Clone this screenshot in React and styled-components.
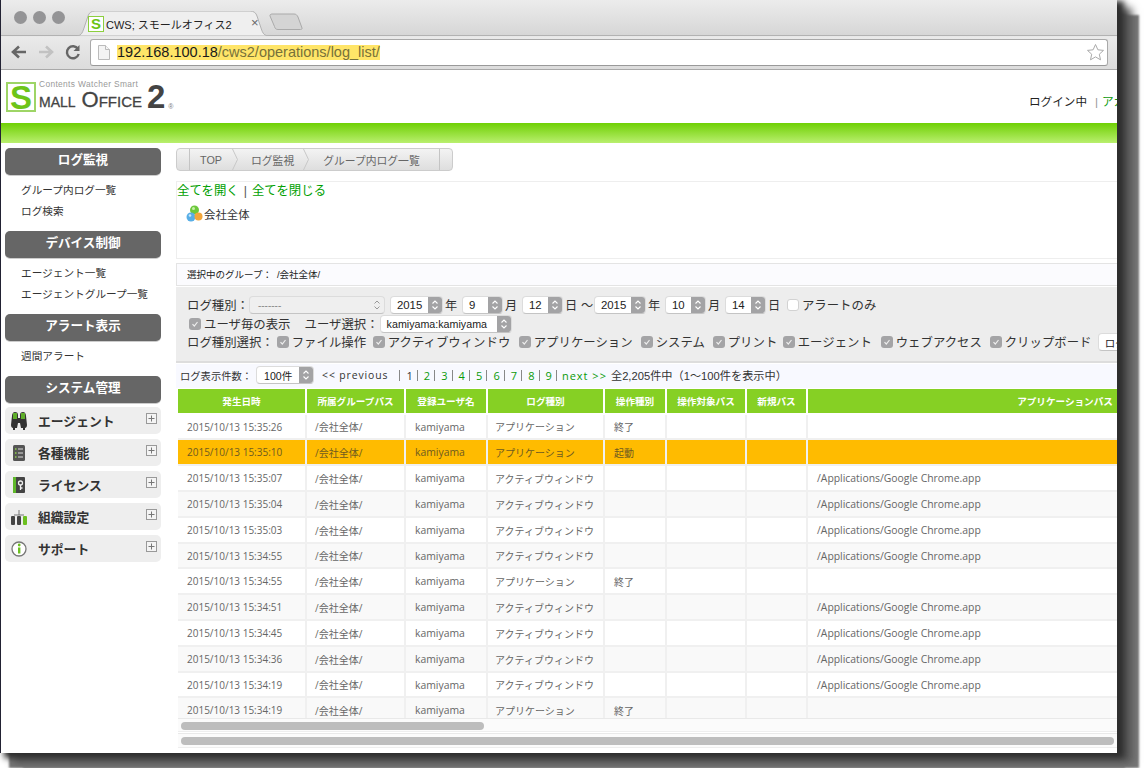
import React from "react";
import styled, { createGlobalStyle } from "styled-components";

const JP = `"Liberation Sans", "Noto Sans CJK JP", sans-serif`;
const TB = `"Open Sans", "Noto Sans CJK JP", sans-serif`;

const Global = createGlobalStyle`
  html, body { margin: 0; padding: 0; background: #fff; }
  body { font-family: ${JP}; color: #333; }
  * { box-sizing: border-box; }
`;

const Stage = styled.div`
  width: 1145px; height: 768px; overflow: hidden; background: #fff;
  padding-left: 1px;
`;
const Win = styled.div`
  width: 1116px; height: 753px; background: #fff; overflow: hidden;
  box-shadow: -1px 0 0 #223, 5px 3px 6px 2px #2e2e2e, 14px 9px 8px 1px #555, 22px 15px 2px #777, 8px 15px 2px #777;
`;

const Chrome = styled.div`
  height: 70px; background: linear-gradient(#ececec, #d6d6d6 52%, #eaeaea 53%, #dcdcdc);
  border-bottom: 1px solid #a9a9a9;
`;
const TabStrip = styled.div`
  height: 36px; display: flex; align-items: flex-end; border-bottom: 1px solid #b2b2b2;
  position: relative;
`;
const Lights = styled.div`
  display: flex; gap: 6px; padding: 0 0 11px 13px; width: 74px; flex: none;
`;
const Light = styled.span`
  width: 13px; height: 13px; border-radius: 50%; background: #949496;
`;
const Tab = styled.div`
  position: relative; width: 196px; height: 25px; margin-bottom: -1px;
  display: flex; align-items: center; padding: 0 0 0 13px; font-size: 11px; color: #222;
  span { position: relative; }
`;
const TabShape = styled.svg`
  position: absolute; left: 0; top: 0;
`;
const Fav = styled.div`
  position: relative; width: 16px; height: 16px; border: 1px solid #8ccf3e; background: #fff;
  color: #6cc414; font: bold 15px/14px "Liberation Sans", sans-serif; text-align: center; margin-right: 2px;
`;
const TabClose = styled.i`
  position: absolute; left: 176px; top: 4px; font: normal 13px/16px "Liberation Sans", sans-serif; color: #666;
`;
const NewTab = styled.svg`
  margin: 0 0 5px -2px;
`;
const Toolbar = styled.div`
  height: 33px; display: flex; align-items: center; padding: 1px 8px 2px 9px;
`;
const NavIcon = styled.svg`
  width: 18px; height: 18px; margin-right: 9px; flex: none;
`;
const Omni = styled.div`
  width: 1018px; height: 27px; margin-left: -1px; background: #fff; border: 1px solid #a9a9a9; border-bottom-color: #999;
  border-radius: 3px; display: flex; align-items: center; padding: 0 2px 0 7px; position: relative;
`;
const UrlMark = styled.div`
  margin-left: 7px; background: #ffe568; height: 15px; font: 14.5px/15px "Liberation Sans", sans-serif; color: #77713a; white-space: nowrap;
  b { font-weight: normal; color: #1a1a1a; }
`;
const Star = styled.svg`
  margin-left: auto;
`;

const Header = styled.div`
  height: 53px; display: flex; align-items: flex-start; justify-content: space-between; padding: 12px 0 0 5px; overflow: hidden;
`;
const Logo = styled.div`
  display: flex; align-items: flex-start; width: 170px;
`;
const LogoS = styled.div`
  width: 30px; height: 30px; border: 2px solid #9ed566; color: #6dc419; font: bold 33px/27px "Liberation Sans", sans-serif; text-align: center; flex: none;
`;
const LogoWords = styled.div`
  display: flex; flex-direction: column; margin: -2px 0 0 3px; color: #444; width: 106px;
  small { font: 8.4px/9px "Liberation Sans", sans-serif; color: #999; letter-spacing: .35px; white-space: nowrap; }
`;
const LogoType = styled.div`
  display: flex; align-items: baseline; white-space: nowrap; line-height: 20px; color: #444; margin-top: 1px;
`;
const LogoPart = styled.span`
  font-size: ${p => p.$s}px; margin-right: ${p => p.$r || 0}px; -webkit-text-stroke: .3px #444;
`;
const LogoTwo = styled.div`
  font: bold 33px/29px "Liberation Sans", sans-serif; color: #444; margin-left: 2px;
`;
const LogoR = styled.span`
  font: 7px/8px "Liberation Sans", sans-serif; color: #777; margin: 21px 0 0 3px;
`;
const Login = styled.div`
  font-size: 11.6px; color: #222; white-space: nowrap; padding-top: 11px; width: 88px; overflow: hidden;
  em { font-style: normal; color: #999; margin: 0 4px 0 8px; }
  a { color: #0a9a0a; }
`;
const GreenBar = styled.div`
  height: 20px; background: linear-gradient(#6fd004, #b9ef6e);
`;

const Body = styled.div`
  display: flex; align-items: flex-start;
`;
const Side = styled.nav`
  width: 160px; margin-left: 4px; padding-top: 5px; flex: none;
`;
const SideHead = styled.div`
  width: 156px; height: 27px; border-radius: 5px; background: #666; color: #fff; font-size: 12.6px; font-weight: bold;
  text-align: center; line-height: 25px; margin-top: ${p => p.$top || 0}px;
  box-shadow: 0 1px 0 #ccc;
`;
const SideList = styled.ul`
  list-style: none; margin: 5px 0 0; padding: 0 0 0 16px; font-size: 10.67px; line-height: 21px; color: #333;
`;
const Accs = styled.div`
  margin-top: 4px; display: flex; flex-direction: column; gap: 5px;
`;
const Acc = styled.div`
  width: 156px; height: 27px; background: #eee; border-radius: 5px; display: flex; align-items: center;
  padding: 0 4px 0 6px; font-size: 12.8px; font-weight: bold; color: #333;
`;
const AccIcon = styled.svg`
  width: 16px; height: 18px; flex: none; margin-right: 11px;
`;
const Plus = styled.svg`
  margin-left: auto; margin-top: -4px;
`;

const Main = styled.main`
  width: 941px; margin-left: 11px; padding-top: 5px; flex: none; overflow: hidden;
`;
const Crumbs = styled.div`
  width: 277px; height: 23px; border: 1px solid #ccc; border-radius: 4px; background: linear-gradient(#f3f3f3, #dedede);
  display: flex; align-items: center; font-size: 10.8px; color: #666; position: relative; padding-left: 23px;
`;
const CrumbCap = styled.i`
  position: absolute; top: 0; bottom: 0; left: 12px; width: 1px; background: #c4c4c4;
`;
const CrumbEnd = styled.i`
  position: absolute; top: 0; bottom: 0; right: 12px; width: 1px; background: #c4c4c4;
`;
const Crumb = styled.span`
  display: inline-block; white-space: nowrap;
`;
const CrumbSep = styled.svg`
  margin: 0 ${p => p.$r}px 0 ${p => p.$l}px; flex: none;
`;
const TreeBox = styled.div`
  margin-top: 10px; height: 78px; border: 1px solid #eee; border-right: 0; padding: 2px 0 0 0;
`;
const TreeLinks = styled.div`
  font-size: 12.4px; line-height: 15px; white-space: nowrap; color: #00a000;
  em { font-style: normal; color: #555; margin: 0 5px; }
`;
const TreeNode = styled.div`
  display: flex; align-items: center; margin: 6px 0 0 9px; font-size: 11.4px; color: #333;
  svg { margin-right: 1px; }
`;
const GroupBar = styled.div`
  margin-top: 4px; height: 23px; background: #fbfbfe; border: 1px solid #e4e4e4; border-right: 0;
  font-size: 9.5px; line-height: 21px; padding-left: 10px; color: #222;
  span { margin-left: 5px; }
`;
const Filter = styled.div`
  margin-top: 1px; height: 76px; background: #ededed; padding: 9px 0 0 11px; border-bottom: 2px solid #ddd;
  font-size: 12.4px; color: #333; white-space: nowrap; overflow: hidden;
`;
const FRow = styled.div`
  display: flex; align-items: center; height: 18.5px; margin-left: ${p => p.$ml || 0}px;
`;
const Spin = styled.div`
  width: ${p => p.$w}px; height: 18px; border-radius: 4px; background: ${p => p.$plain ? "#efefef" : "#fff"};
  border: 1px solid #dcdcdc; border-bottom-color: #c4c4c4; display: flex; align-items: center; flex: none; overflow: hidden;
  font-size: ${p => p.$fs || 11.4}px; color: ${p => p.$plain ? "#888" : "#222"}; position: relative;
  margin-left: ${p => p.$ml || 0}px;
  span { flex: 1; padding-left: ${p => p.$pl || 6}px; min-width: 0; }
`;
const Stepper = styled.i`
  width: 14px; height: 100%; flex: none; background: ${p => p.$plain ? "transparent" : "#a3a3a5"}; display: flex; align-items: center; justify-content: center;
`;
const Unit = styled.span`
  width: 12px; flex: none; margin: 0 ${p => p.$r ?? 5}px 0 ${p => p.$l ?? 2}px; font-size: 12.2px;
`;
const Box = styled.span`
  width: 12px; height: 12px; border-radius: 3px; flex: none; margin-right: 3px;
  background: ${p => p.$off ? "#fff" : "#a4a4a6"}; border: ${p => p.$off ? "1px solid #d2d2d2" : "0"};
  display: inline-flex; align-items: center; justify-content: center;
`;
const Chk = styled.label`
  display: inline-flex; align-items: center; margin-left: ${p => p.$ml ?? 0}px; ${p => p.$w ? `width:${p.$w}px;` : ""} flex: none;
`;
const CountBar = styled.div`
  margin-top: 1px; height: 24px; background: #f8f9ff; display: flex; align-items: center; padding: 0 0 2px 4px; font-size: 10.3px; color: #333; white-space: nowrap;
`;
const Pager = styled.div`
  display: flex; align-items: center; font-family: "Open Sans", sans-serif; margin-left: 8px; font-size: 11px;
`;
const Prev = styled.span` font-size: 10.4px; letter-spacing: .9px; margin-right: 10px; `;
const PNum = styled.span`
  width: 17.4px; text-align: center; color: ${p => p.$cur ? "#333" : "#0a9a0a"}; position: relative; padding-left: 5px;
  &::before { content: ""; position: absolute; left: 1px; top: 2px; bottom: 2px; width: 1px; background: #888; }
`;
const PEnd = styled.i`
  width: 1px; height: 11px; background: #888; margin-left: 1px;
`;
const Next = styled.a`
  color: #0a9a0a; letter-spacing: 1px; margin: 0 4px 0 5px;
`;
const Total = styled.span`
  font-size: 11.2px;
`;
const TableWrap = styled.div`
  margin: 1px 0 0 2px; height: 329px; overflow: hidden;
`;
const Table = styled.table`
  width: 1146px; table-layout: fixed; border-collapse: separate; border-spacing: 0; font-family: ${TB};
`;
const Th = styled.th`
  height: 26px; background: #86d024; color: #fff; font-size: 9.6px; font-weight: bold; border-right: 2px solid #fff; border-bottom: 2px solid #fff; padding: 0; text-align: center;
  font-family: ${JP};
`;
const Td = styled.td`
  height: ${p => p.$h}px; padding: 0 0 0 ${p => p.$pl ?? 9}px; font-size: ${p => p.$fs || 10}px; border-right: 2px solid #f0f0f0; border-bottom: 2px solid #f0f0f0; white-space: nowrap; overflow: hidden;
  background: ${p => p.$hot ? "#ffbb00" : p.$alt ? "#f9f9f9" : "#fff"};
  color: ${p => p.$hot ? "#6d5a20" : "#666"};
`;
const Scroll = styled.div`
  height: ${p => p.$h}px; margin: ${p => p.$mt}px 0 0 2px; padding: ${p => p.$pt}px 3px 0 3px; background: #fbfbfb; border-top: 1px solid #e9e9e9;
  border-bottom: 1px solid #eee;
`;
const Thumb = styled.div`
  width: ${p => p.$w}; height: 8px; border-radius: 4px; background: #bdbdbd;
`;

const Arrows = () => (
  <svg width="8" height="12" viewBox="0 0 8 12" fill="none" stroke="#fff" strokeWidth="1.1">
    <path d="M1.5 4.5L4 2l2.5 2.5M1.5 7.5L4 10l2.5-2.5" />
  </svg>
);
const ArrowsDark = () => (
  <svg width="8" height="12" viewBox="0 0 8 12" fill="none" stroke="#999" strokeWidth="1">
    <path d="M1.5 4.5L4 2l2.5 2.5M1.5 7.5L4 10l2.5-2.5" />
  </svg>
);
const Num = ({ w, v, ml, fs, pl }) => (
  <Spin $w={w} $ml={ml} $fs={fs} $pl={pl}>
    <span>{v}</span>
    <Stepper><Arrows /></Stepper>
  </Spin>
);
const Tick = () => (
  <svg width="8" height="8" viewBox="0 0 8 8" fill="none" stroke="#eee" strokeWidth="1.2"><path d="M1.5 4.2L3.3 6l3.2-4" /></svg>
);
const Check = ({ children, ml, w }) => (
  <Chk $ml={ml} $w={w}><Box><Tick /></Box>{children}</Chk>
);
const PlusIcon = () => (
  <Plus width="11" height="11" viewBox="0 0 11 11" fill="none" stroke="#999">
    <rect x=".5" y=".5" width="10" height="10" fill="#f4f4f4" />
    <path d="M2.5 5.5h6M5.5 2.5v6" stroke="#777" />
  </Plus>
);
const Chevron = ({ l, r }) => (
  <CrumbSep $l={l} $r={r} width="6" height="21" viewBox="0 0 6 21" fill="none" stroke="#c8c8c8"><path d="M.5 0L5.5 10.5L.5 21" /></CrumbSep>
);

const AW = "アクティブウィンドウ";
const AP = "アプリケーション";
const PATH = "/Applications/Google Chrome.app";
const rows = [
  ["15:35:26", AP, "終了", "", 25],
  ["15:35:10", AP, "起動", "", 26],
  ["15:35:07", AW, "", PATH, 26],
  ["15:35:04", AW, "", PATH, 26],
  ["15:35:03", AW, "", PATH, 26],
  ["15:34:55", AW, "", PATH, 25],
  ["15:34:55", AP, "終了", "", 26],
  ["15:34:51", AW, "", PATH, 26],
  ["15:34:45", AW, "", PATH, 26],
  ["15:34:36", AW, "", PATH, 26],
  ["15:34:19", AW, "", PATH, 25],
  ["15:34:19", AP, "終了", "", 26],
];
const cols = [129, 99, 82, 117, 62, 80, 61, 516];
const heads = ["発生日時", "所属グループパス", "登録ユーザ名", "ログ種別", "操作種別", "操作対象パス", "新規パス", "アプリケーションパス"];
const kinds = ["ファイル操作", AW, AP, "システム", "プリント", "エージェント", "ウェブアクセス", "クリップボード"];

export default function App() {
  return (
    <Stage>
      <Global />
      <Win>
        <Chrome>
          <TabStrip>
            <Lights><Light /><Light /><Light /></Lights>
            <Tab>
              <TabShape width="196" height="25" viewBox="0 0 196 25">
                <path d="M0 25c6 0 7-2 9-8l4-12c1-3 3-5 7-5h155c4 0 6 2 7 5l4 12c2 6 3 8 10 8z" fill="#efefef" stroke="#b2b2b2" />
              </TabShape>
              <Fav>S</Fav>
              <span>CWS; スモールオフィス2</span>
              <TabClose>×</TabClose>
            </Tab>
            <NewTab width="34" height="17" viewBox="0 0 34 17">
              <path d="M3 1h22c2 0 3 1 4 3l4 11c.3 1-.5 1.500-1.500 1.500H9c-2 0-3-1-3.500-3L1 3c-.3-1 .5-2 2-2z" fill="#d4d4d4" stroke="#aaa" />
            </NewTab>
          </TabStrip>
          <Toolbar>
            <NavIcon viewBox="0 0 18 18" fill="none" stroke="#666" strokeWidth="2.6"><path d="M16 9H4M9 3.500L3 9l6 5.500" /></NavIcon>
            <NavIcon viewBox="0 0 18 18" fill="none" stroke="#c2c2c2" strokeWidth="2.6"><path d="M2 9h12M9 3.500L15 9l-6 5.500" /></NavIcon>
            <NavIcon viewBox="0 0 18 18" fill="none" stroke="#666" strokeWidth="2.4"><path d="M14 6a6 6 0 1 0 .7 5" /><path d="M15.500 2v6h-6z" fill="#666" stroke="none" /></NavIcon>
            <Omni>
              <svg width="12" height="15" viewBox="0 0 12 15" fill="#f4f4f4" stroke="#bbb"><path d="M.5.5h7l4 4v10H.5z" /><path d="M7.500.5v4h4" /></svg>
              <UrlMark><b>192.168.100.18</b>/cws2/operations/log_list/</UrlMark>
              <Star width="19" height="19" viewBox="0 0 19 19" fill="#fff" stroke="#aaa"><path d="M9.500 1.500l2.400 5.300 5.600.6-4.200 3.800 1.200 5.600-5-2.900-5 2.900 1.200-5.600L1.500 7.400l5.600-.6z" /></Star>
            </Omni>
          </Toolbar>
        </Chrome>
        <Header>
          <Logo>
            <LogoS>S</LogoS>
            <LogoWords>
              <small>Contents Watcher Smart</small>
              <LogoType>
                <LogoPart $s={14} $r={6}>MALL</LogoPart>
                <LogoPart $s={22}>O</LogoPart>
                <LogoPart $s={15}>FFICE</LogoPart>
              </LogoType>
            </LogoWords>
            <LogoTwo>2</LogoTwo>
            <LogoR>®</LogoR>
          </Logo>
          <Login>ログイン中<em>|</em><a>アカウント</a></Login>
        </Header>
        <GreenBar />
        <Body>
          <Side>
            <SideHead>ログ監視</SideHead>
            <SideList><li>グループ内ログ一覧</li><li>ログ検索</li></SideList>
            <SideHead $top={9}>デバイス制御</SideHead>
            <SideList><li>エージェント一覧</li><li>エージェントグループ一覧</li></SideList>
            <SideHead $top={9}>アラート表示</SideHead>
            <SideList><li>週間アラート</li></SideList>
            <SideHead $top={9}>システム管理</SideHead>
            <Accs>
              <Acc>
                <AccIcon viewBox="0 0 16 18"><path d="M4 0c2 0 3 1 3 3v3h2V3c0-2 1-3 3-3s3 2 3 4l1 9c0 2-1 3-2 3v2h-2v-2h-2l-1-5H7l-1 5H4v2H2v-2c-1 0-2-1-2-3l1-9c0-2 1-4 3-4z" fill="#333" /><path d="M2 1h4v6H2zM10 1h4v6h-4z" fill="#5fae2a" /></AccIcon>
                エージェント<PlusIcon />
              </Acc>
              <Acc>
                <AccIcon viewBox="0 0 16 18"><rect x="2" y="1" width="12" height="16" rx="1.500" fill="#555" /><path d="M7 5h5M7 9h5M7 13h5" stroke="#ddd" /><path d="M4 5h1.500M4 9h1.500M4 13h1.500" stroke="#8fd04a" strokeWidth="1.500" /></AccIcon>
                各種機能<PlusIcon />
              </Acc>
              <Acc>
                <AccIcon viewBox="0 0 16 18"><rect x="2" y="1" width="12" height="16" rx="1" fill="#444" /><rect x="2" y="1" width="3" height="16" fill="#5fb82a" /><circle cx="9.500" cy="7" r="2" fill="none" stroke="#eee" strokeWidth="1.300" /><path d="M9.500 9v5M9.500 12h2" stroke="#eee" strokeWidth="1.300" /></AccIcon>
                ライセンス<PlusIcon />
              </Acc>
              <Acc>
                <AccIcon viewBox="0 0 16 18"><path d="M8 2v5M3 7h10" stroke="#777" fill="none" /><rect x="0" y="8" width="4" height="9" rx="1" fill="#444" /><rect x="6" y="8" width="4" height="9" rx="1" fill="#444" /><rect x="12" y="8" width="4" height="9" rx="1" fill="#6cc020" /></AccIcon>
                組織設定<PlusIcon />
              </Acc>
              <Acc>
                <AccIcon viewBox="0 0 16 18"><circle cx="8" cy="9" r="7" fill="#fff" stroke="#777" strokeWidth="1.300" /><rect x="7" y="7.500" width="2.400" height="6" fill="#6cc020" /><circle cx="8.200" cy="5" r="1.400" fill="#6cc020" /></AccIcon>
                サポート<PlusIcon />
              </Acc>
            </Accs>
          </Side>
          <Main>
            <Crumbs>
              <CrumbCap /><CrumbEnd />
              <Crumb>TOP</Crumb><Chevron l={10} r={13} />
              <Crumb>ログ監視</Crumb><Chevron l={9} r={14} />
              <Crumb>グループ内ログ一覧</Crumb>
            </Crumbs>
            <TreeBox>
              <TreeLinks>全てを開く<em>|</em>全てを閉じる</TreeLinks>
              <TreeNode>
                <svg width="17" height="17" viewBox="0 0 17 17">
                  <circle cx="8.500" cy="5" r="4.500" fill="#6cc83c" />
                  <circle cx="5" cy="12" r="4.500" fill="#58aee6" />
                  <circle cx="12.500" cy="11.500" r="4" fill="#f2a63a" />
                  <circle cx="7.500" cy="3.500" r="1.500" fill="#c6f0a8" />
                  <circle cx="4" cy="10.500" r="1.300" fill="#cbe8fa" />
                </svg>
                会社全体
              </TreeNode>
            </TreeBox>
            <GroupBar>選択中のグループ：<span>/会社全体/</span></GroupBar>
            <Filter>
              <FRow>
                ログ種別：
                <Spin $w={136} $plain $fs={10} $pl={8}><span>-------</span><Stepper $plain><ArrowsDark /></Stepper></Spin>
                <Num w={53} v="2015" ml={5} /><Unit>年</Unit>
                <Num w={41} v="9" /><Unit>月</Unit>
                <Num w={41} v="12" /><Unit $r={4}>日</Unit>
                <Unit $l={0} $r={1}>〜</Unit>
                <Num w={52} v="2015" /><Unit>年</Unit>
                <Num w={41} v="10" /><Unit>月</Unit>
                <Num w={41} v="14" /><Unit $r={7}>日</Unit>
                <Chk><Box $off />アラートのみ</Chk>
              </FRow>
              <FRow $ml={2}>
                <Check>ユーザ毎の表示</Check>
                <Chk $ml={14}>ユーザ選択：</Chk>
                <Num w={132} v="kamiyama:kamiyama" ml={1} fs={10.7} />
              </FRow>
              <FRow>
                ログ種別選択：
                <Check ml={3} w={96}>{kinds[0]}</Check>
                <Check w={146}>{kinds[1]}</Check>
                <Check w={122}>{kinds[2]}</Check>
                <Check w={72}>{kinds[3]}</Check>
                <Check w={70}>{kinds[4]}</Check>
                <Check w={98}>{kinds[5]}</Check>
                <Check w={109}>{kinds[6]}</Check>
                <Check w={108}>{kinds[7]}</Check>
                <Spin $w={60} $fs={10.5}><span>ログ</span></Spin>
              </FRow>
            </Filter>
            <CountBar>
              ログ表示件数：
              <Num w={58} v="100件" ml={4} fs={10.6} pl={7} />
              <Pager>
                <Prev>&lt;&lt; previous</Prev>
                <PNum $cur>1</PNum>
                {[2, 3, 4, 5, 6, 7, 8, 9].map(n => <PNum key={n}>{n}</PNum>)}
                <PEnd />
                <Next>next &gt;&gt;</Next>
              </Pager>
              <Total>全2,205件中（1〜100件を表示中）</Total>
            </CountBar>
            <TableWrap>
              <Table>
                <colgroup>{cols.map((c, i) => <col key={i} style={{ width: c }} />)}</colgroup>
                <thead><tr>{heads.map(h => <Th key={h}>{h}</Th>)}</tr></thead>
                <tbody>
                  {rows.map((r, i) => {
                    const p = { $hot: i === 1, $alt: i % 2 === 1, $h: r[4] };
                    return (
                      <tr key={i}>
                        <Td {...p}>2015/10/13 {r[0]}</Td>
                        <Td {...p} $pl={8}>/会社全体/</Td>
                        <Td {...p} $pl={9} $fs={10.4}>kamiyama</Td>
                        <Td {...p} $pl={7}>{r[1]}</Td>
                        <Td {...p} $pl={9}>{r[2]}</Td>
                        <Td {...p} />
                        <Td {...p} />
                        <Td {...p} $fs={10.4}>{r[3]}</Td>
                      </tr>
                    );
                  })}
                </tbody>
              </Table>
            </TableWrap>
            <Scroll $h={14} $mt={0} $pt={3}><Thumb $w="303px" /></Scroll>
            <Scroll $h={15} $mt={1} $pt={3}><Thumb $w="100%" /></Scroll>
          </Main>
        </Body>
      </Win>
    </Stage>
  );
}
